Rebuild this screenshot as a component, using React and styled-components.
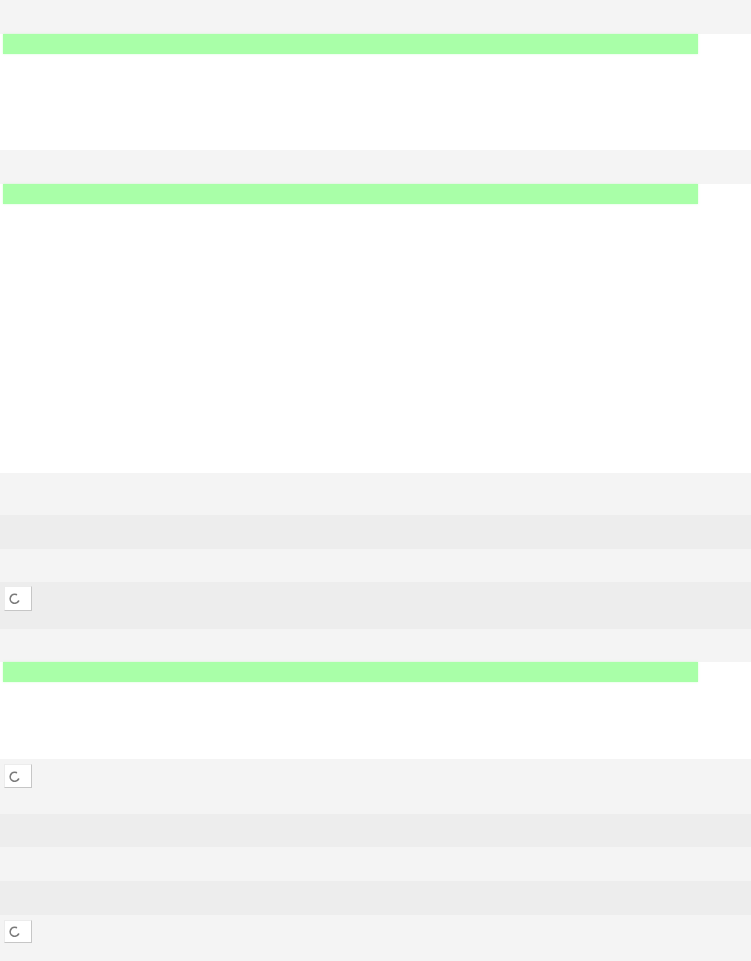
import React from 'react';
import styled, { createGlobalStyle } from 'styled-components';

const GlobalStyle = createGlobalStyle`
  html, body {
    margin: 0;
    padding: 0;
    background: #ffffff;
    font-family: "Liberation Sans", Arial, sans-serif;
  }
`;

const Page = styled.div`
  width: 751px;
  display: flex;
  flex-direction: column;
`;

const Band = styled.div`
  height: ${(p) => p.h}px;
  background: ${(p) => (p.dark ? '#ededed' : '#f4f4f4')};
  padding: ${(p) => p.pad || 0}px 0 0 4px;
  box-sizing: border-box;
`;

const Blank = styled.div`
  height: ${(p) => p.h}px;
`;

const Progress = styled.div`
  height: 20px;
  width: 695px;
  margin-left: 3px;
  background: #a9ffa8;
  box-shadow: 0 0 2px rgba(169, 255, 168, 0.5);
`;

const Thumb = styled.div`
  width: 28px;
  height: ${(p) => p.h || 25}px;
  box-sizing: border-box;
  background: #ffffff;
  border: 1px solid #ececec;
  border-right-color: #c6c6c6;
  border-bottom-color: #c6c6c6;
  display: flex;
  align-items: center;
  padding-left: 3px;
`;

const Spinner = () => (
  <svg width="13" height="13" viewBox="0 0 13 13">
    <path
      d="M8.4 2.6 A4.5 4.5 0 1 0 10.6 9.0"
      fill="none"
      stroke="#7a7a7a"
      strokeWidth="1.6"
      strokeLinecap="round"
    />
  </svg>
);

export default function App() {
  return (
    <Page>
      <GlobalStyle />
      <Band h={34} />
      <Progress />
      <Blank h={96} />

      <Band h={34} />
      <Progress />
      <Blank h={269} />

      <Band h={42} />
      <Band h={34} dark />
      <Band h={33} />
      <Band h={47} dark pad={4}>
        <Thumb>
          <Spinner />
        </Thumb>
      </Band>
      <Band h={33} />
      <Progress />
      <Blank h={77} />

      <Band h={55} pad={5}>
        <Thumb h={24}>
          <Spinner />
        </Thumb>
      </Band>
      <Band h={33} dark />
      <Band h={34} />
      <Band h={34} dark />
      <Band h={46} pad={5}>
        <Thumb h={23}>
          <Spinner />
        </Thumb>
      </Band>
    </Page>
  );
}
